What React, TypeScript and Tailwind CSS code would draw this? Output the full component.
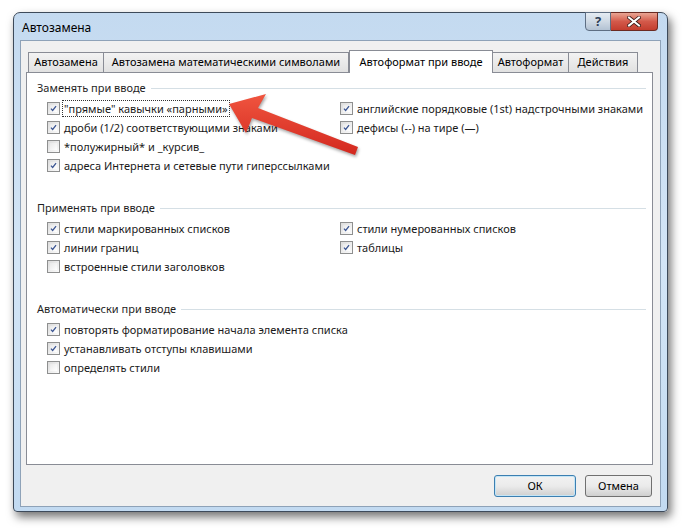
import React from 'react'

const font = { fontFamily: '"Noto Sans", "Open Sans", sans-serif' }

function Check({ on }: { on: boolean }) {
  return (
    <span className="w-[13px] h-[13px] border border-[#8e8f8f] bg-gradient-to-br from-[#dcdcdc] to-[#fbfbfb] p-[2px] shrink-0">
      <span className="block w-full h-full bg-gradient-to-br from-[#e9e9e9] to-[#ffffff] relative">
        {on && (
          <svg viewBox="0 0 9 9" className="absolute inset-0 w-full h-full">
            <path d="M1.2 4.6 L3.4 7 L7.8 1.3" fill="none" stroke="#3b5592" strokeWidth="1.6" />
          </svg>
        )}
      </span>
    </span>
  )
}

function Row({ on, label, focus }: { on: boolean; label: string; focus?: boolean }) {
  return (
    <div className="h-[19px] flex items-center gap-[3px]">
      <Check on={on} />
      <span
        className={
          'text-[11px] leading-[15px] text-[#1a1a1a] whitespace-nowrap px-[1px] ' +
          (focus ? 'outline outline-1 outline-dotted outline-[#333]' : '')
        }
      >
        {label}
      </span>
    </div>
  )
}

function Section({ title, left, right }: { title: string; left: [boolean, string, boolean?][]; right: [boolean, string][] }) {
  return (
    <div className="mb-[25px]">
      <div className="flex items-center h-[16px] mr-[6px]">
        <span className="text-[11px] text-[#1f1f1f] whitespace-nowrap">{title}</span>
        <span className="flex-1 h-px bg-[#d5dfe5] ml-[5px]" />
      </div>
      <div className="flex mt-[3px] pl-[10px]">
        <div className="w-[293px]">
          {left.map(([on, l, f]) => (
            <Row key={l} on={on} label={l} focus={f} />
          ))}
        </div>
        <div>
          {right.map(([on, l]) => (
            <Row key={l} on={on} label={l} />
          ))}
        </div>
      </div>
    </div>
  )
}

const tabs = [
  ['Автозамена', 76],
  ['Автозамена математическими символами', 246],
  ['Автоформат при вводе', 144],
  ['Автоформат', 77],
  ['Действия', 70],
] as const

export default function App() {
  return (
    <div className="w-[685px] h-[531px] bg-white pt-[12px] pl-[13px] overflow-hidden" style={font}>
      <div className="w-[655px] h-[500px] rounded-t-[7px] rounded-b-[4px] border border-[#3d4a5a] bg-gradient-to-b from-[#c4daf0] via-[#d3e5f6] to-[#c2daf1] shadow-[3px_5px_10px_rgba(0,0,0,0.55)] flex flex-col">
        <div className="h-[27px] flex justify-between pl-[8px] pr-[9px]">
          <span className="text-[12px] text-black mt-[6px]">Автозамена</span>
          <div className="flex h-[19px] -mt-px">
            <div className="w-[26px] border border-[#5e6e83] rounded-bl-[4px] bg-gradient-to-b from-[#e5ecf3] via-[#cfd9e4] to-[#b3c2d3] flex items-center justify-center text-[13px] font-bold text-[#2d3e57] leading-none">
              ?
            </div>
            <div className="w-[47px] border border-l-0 border-[#6b2a22] rounded-br-[4px] bg-gradient-to-b from-[#e8a493] via-[#d3594a] to-[#c33d2e] flex items-center justify-center">
              <svg viewBox="0 0 14 11" className="w-[14px] h-[11px]">
                <path d="M2 1.5 L12 9.5 M12 1.5 L2 9.5" stroke="#3a1a16" strokeWidth="3.6" strokeLinecap="square" />
                <path d="M2 1.5 L12 9.5 M12 1.5 L2 9.5" stroke="#ffffff" strokeWidth="2" strokeLinecap="square" />
              </svg>
            </div>
          </div>
        </div>
        <div className="mx-[6px] h-[467px] border border-[#8ea2b8] bg-[#f0f0f0] flex flex-col">
          <div className="relative pl-[5px] pt-[8px] pr-[7px]">
            <div className="flex items-end h-[23px] pl-[3px]">
              {tabs.map(([t, w], i) =>
                i === 2 ? (
                  <div
                    key={t}
                    className="h-[23px] -mb-px relative z-10 border border-b-0 border-[#898c95] bg-white flex items-center justify-center text-[11px] text-black whitespace-nowrap"
                    style={{ width: w }}
                  >
                    {t}
                  </div>
                ) : (
                  <div
                    key={t}
                    className="h-[20px] border border-b-0 border-[#898c95] -ml-px bg-gradient-to-b from-[#f3f3f3] to-[#e1e1e1] flex items-center justify-center text-[11px] text-black whitespace-nowrap"
                    style={{ width: w }}
                  >
                    {t}
                  </div>
                )
              )}
            </div>
            <div className="h-[393px] border border-[#898c95] bg-white pl-[10px] pt-[7px]">
              <Section
                title="Заменять при вводе"
                left={[
                  [true, '"прямые" кавычки «парными»', true],
                  [true, 'дроби (1/2) соответствующими знаками'],
                  [false, '*полужирный* и _курсив_'],
                  [true, 'адреса Интернета и сетевые пути гиперссылками'],
                ]}
                right={[
                  [true, 'английские порядковые (1st) надстрочными знаками'],
                  [true, 'дефисы (--) на тире (—)'],
                ]}
              />
              <Section
                title="Применять при вводе"
                left={[
                  [true, 'стили маркированных списков'],
                  [true, 'линии границ'],
                  [false, 'встроенные стили заголовков'],
                ]}
                right={[
                  [true, 'стили нумерованных списков'],
                  [true, 'таблицы'],
                ]}
              />
              <Section
                title="Автоматически при вводе"
                left={[
                  [true, 'повторять форматирование начала элемента списка'],
                  [true, 'устанавливать отступы клавишами'],
                  [false, 'определять стили'],
                ]}
                right={[]}
              />
            </div>
            <svg className="absolute left-0 top-0 w-[640px] h-[200px] pointer-events-none" viewBox="0 0 640 200">
              <defs>
                <linearGradient id="ar" x1="0" y1="0" x2="0" y2="1">
                  <stop offset="0" stopColor="#f0553f" />
                  <stop offset="1" stopColor="#d3281f" />
                </linearGradient>
              </defs>
              <g transform="translate(-21,-41)" filter="drop-shadow(1px 2px 1.5px rgba(0,0,0,0.35))">
                <polygon
                  points="229,104 266,94 258,108 358,147 355,155 252,118 246,133"
                  fill="url(#ar)"
                />
              </g>
            </svg>
          </div>
          <div className="flex justify-end gap-[9px] pr-[8px] mt-[10px]">
            <button className="w-[82px] h-[22px] rounded-[3px] border border-[#3c7fb1] bg-gradient-to-b from-[#f2f2f2] via-[#ebebeb] to-[#cfcfcf] shadow-[inset_0_0_0_1px_#c4e5f6] text-[11px] text-black">
              ОК
            </button>
            <button className="w-[67px] h-[22px] rounded-[3px] border border-[#707070] bg-gradient-to-b from-[#f2f2f2] via-[#ebebeb] to-[#cfcfcf] text-[11px] text-black">
              Отмена
            </button>
          </div>
        </div>
      </div>
    </div>
  )
}
